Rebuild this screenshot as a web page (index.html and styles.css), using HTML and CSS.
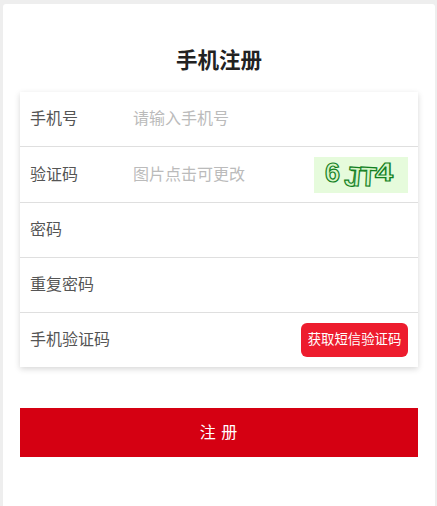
FILE: index.html
```html
<!DOCTYPE html>
<html lang="zh-CN">
<head>
    <meta charset="UTF-8">
    <meta name="viewport" content="width=device-width, initial-scale=1.0">
    <title>手机注册</title>
    <link rel="stylesheet" href="styles.css">
</head>
<body>

    <div class="register">
        <h1 class="register__title">手机注册</h1>

        <form class="register__form">
            <div class="register__row">
                <label class="register__label">手机号</label>
                <input class="register__input" type="text" placeholder="请输入手机号">
            </div>
            <div class="register__row register__row--captcha">
                <label class="register__label">验证码</label>
                <input class="register__input" type="text" placeholder="图片点击可更改">
                <svg class="register__captcha" viewBox="0 0 94 36" width="94" height="36">
                    <rect width="94" height="36" fill="#e6fbdc"/>
                    <g class="register__captcha-text">
                        <text x="11" y="25" font-size="27">6</text>
                        <text x="31" y="29" font-size="27" transform="rotate(8 38 18)">J</text>
                        <text x="35" y="29" font-size="27" transform="rotate(5 44 18)">T</text>
                        <text x="46" y="29" font-size="27" transform="rotate(3 54 18)">T</text>
                        <text transform="translate(61 24) scale(1.25 1)" font-size="26">4</text>
                    </g>
                </svg>
            </div>
            <div class="register__row">
                <label class="register__label">密码</label>
                <input class="register__input" type="password">
            </div>
            <div class="register__row">
                <label class="register__label">重复密码</label>
                <input class="register__input" type="password">
            </div>
            <div class="register__row">
                <label class="register__label">手机验证码</label>
                <button class="register__sms" type="button">获取短信验证码</button>
            </div>
        </form>

        <button class="register__submit" type="button">注 册</button>
    </div>

</body>
</html>
```

FILE: styles.css
```css
* {
    box-sizing: border-box;
}

body {
    margin: 0;
    height: 506px;
    padding: 4px 2px 0 3px;
    overflow: hidden;
    background: #eee;
    font-family: "Noto Sans CJK SC", sans-serif;
}

/* Card */
.register {
    height: 502px;
    padding: 0 17px;
    background: #fff;
    border-radius: 3px 3px 0 0;
}

.register__title {
    margin: 0;
    padding-top: 40px;
    height: 88px;
    font-size: 21.5px;
    line-height: 30px;
    font-weight: bold;
    text-align: center;
    color: #222;
}

/* Form */
.register__form {
    background: #fff;
    box-shadow: 0 2px 6px rgba(0, 0, 0, 0.16);
}

.register__row {
    display: flex;
    align-items: center;
    height: 55px;
    padding: 0 10px;
    border-bottom: 1px solid #dfdfdf;
}

.register__row--captcha {
    height: 56px;
}

.register__row:last-child {
    height: 54px;
    border-bottom: none;
    justify-content: space-between;
}

.register__label {
    flex: none;
    width: 103px;
    padding-bottom: 4px;
    font-size: 16px;
    line-height: 20px;
    color: #555;
    white-space: nowrap;
}

.register__input {
    flex: 1;
    min-width: 0;
    padding: 0 0 4px;
    border: none;
    outline: none;
    background: transparent;
    font: inherit;
    font-size: 16px;
}

.register__input::placeholder {
    color: #bbb;
}

.register__captcha {
    flex: none;
    display: block;
}

.register__captcha-text text {
    font-family: "Liberation Sans", sans-serif;
    font-weight: bold;
    fill: #d6f5c8;
    stroke: #12801f;
    stroke-width: 1.2;
}

.register__sms {
    flex: none;
    width: 107px;
    height: 34px;
    padding: 0 0 4px;
    border: none;
    border-radius: 6px;
    background: #ed1c2e;
    color: #fff;
    font: inherit;
    font-size: 13.4px;
    line-height: 16px;
    white-space: nowrap;
}

/* Submit */
.register__submit {
    display: block;
    width: 100%;
    height: 49px;
    margin-top: 41px;
    padding: 0 0 4px;
    border: none;
    background: #d50012;
    color: #fff;
    font: inherit;
    font-size: 16px;
    line-height: 20px;
    letter-spacing: 1px;
}
```
